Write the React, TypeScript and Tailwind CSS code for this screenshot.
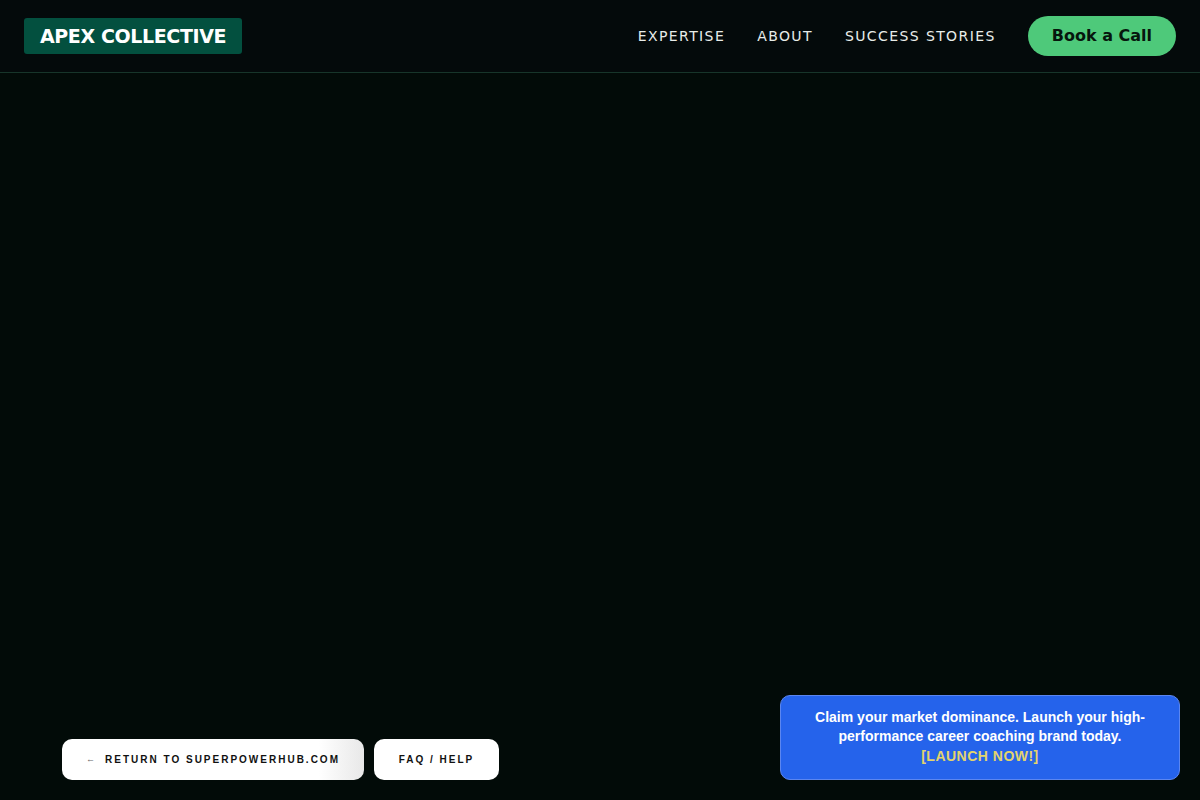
const navLinks = ['EXPERTISE', 'ABOUT', 'SUCCESS STORIES'];

export default function App() {
  return (
    <div className="min-h-[800px] h-[800px] w-full flex flex-col bg-[#020b08] font-['DejaVu_Sans',sans-serif] overflow-hidden">
      {/* Header */}
      <header className="h-[73px] shrink-0 flex items-center justify-between px-6 bg-[#040a0b] border-b border-[#17352a]">
        <div className="h-9 px-4 flex items-center rounded-[3px] bg-[#03503f]">
          <span className="text-white font-bold text-[19px] tracking-[-0.02em]">APEX COLLECTIVE</span>
        </div>
        <nav className="flex items-center">
          <div className="flex items-center gap-8 mr-8">
            {navLinks.map((l) => (
              <a key={l} className="text-[#e8ece9] text-[14px] tracking-[0.1em]">
                {l}
              </a>
            ))}
          </div>
          <button className="h-10 px-6 rounded-full bg-[#4ec97a] text-[#06160d] font-bold text-[16px]">
            Book a Call
          </button>
        </nav>
      </header>

      {/* Body */}
      <main className="flex-1 flex items-end justify-between pl-[62px] pr-5 pb-5">
        <div className="flex gap-[10px] font-['Liberation_Sans',sans-serif]">
          <a className="h-[41px] w-[302px] flex items-center justify-center rounded-[10px] bg-gradient-to-r from-white from-85% to-[#e8e8e8] text-[#111] text-[10px] font-bold tracking-[0.2em]">
            <span className="text-[9px] mr-2 text-[#666] font-normal">←</span>RETURN TO SUPERPOWERHUB.COM
          </a>
          <a className="h-[41px] w-[125px] flex items-center justify-center rounded-[10px] bg-white text-[#111] text-[10px] font-bold tracking-[0.2em]">
            FAQ / HELP
          </a>
        </div>
        <div className="w-[400px] h-[85px] flex flex-col items-center justify-center rounded-[10px] bg-[#2563eb] border border-[#5b86f0] px-8 pb-[1px] text-center font-['Liberation_Sans',sans-serif] font-bold text-[14px] leading-[19.5px] text-white">
          <p>Claim your market dominance. Launch your high-performance career coaching brand today.</p>
          <span className="text-[#e3d46c] tracking-[0.035em]">[LAUNCH NOW!]</span>
        </div>
      </main>
    </div>
  );
}
